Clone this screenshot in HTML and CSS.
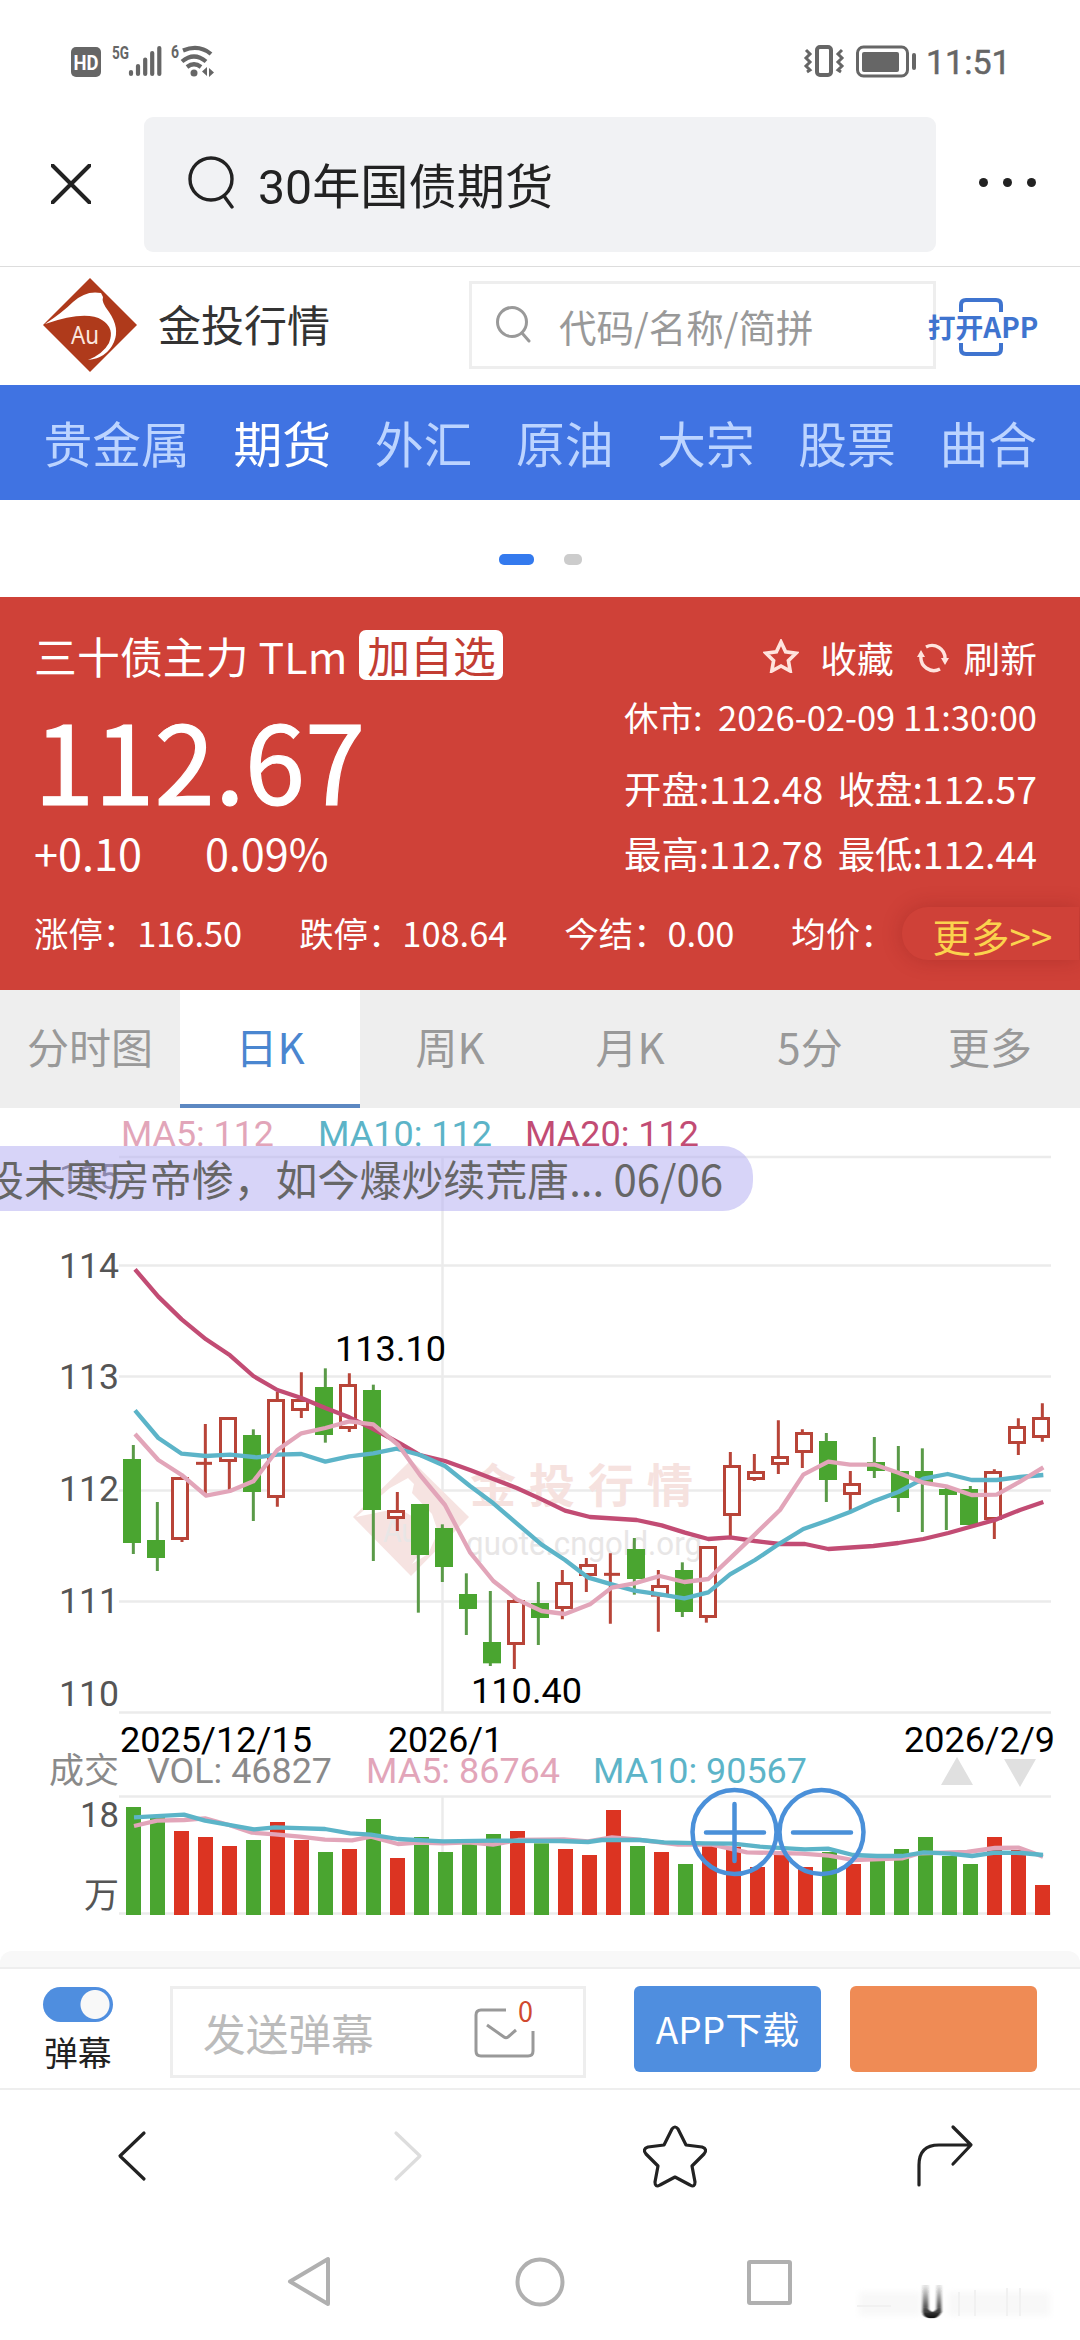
FILE: index.html
```html
<!DOCTYPE html>
<html lang="zh-CN">
<head>
<meta charset="utf-8">
<title>30年国债期货</title>
<link rel="stylesheet" href="styles.css">
</head>
<body>
<header class="status">
  <svg class="status-left" width="170" height="60" viewBox="50 30 170 60">
    <rect x="71" y="47" width="30" height="30" rx="5" fill="#666"/>
    <text x="73.500" y="70" class="st-hd" textLength="25" lengthAdjust="spacingAndGlyphs">HD</text>
    <text x="112" y="59" class="st-5g" textLength="17" lengthAdjust="spacingAndGlyphs">5G</text>
    <g stroke="#666" stroke-width="4.200" stroke-linecap="round">
      <path d="M131 72v2M138 66v8M145.200 59.500v14.500M152.200 53v21M159.300 48v26"/>
    </g>
    <text x="171" y="58" class="st-5g" textLength="8" lengthAdjust="spacingAndGlyphs">6</text>
    <g fill="none" stroke="#666" stroke-width="4.200">
      <path d="M183 50.500Q199 44 211 54M182 61.500Q194 51.500 206 61.500M187 67Q194 61.500 201 67"/>
    </g>
    <circle cx="194" cy="73" r="3.500" fill="#666"/>
    <path d="M207 67v9l-5-4.500zM209 68v9l5-4.500z" fill="#666"/>
  </svg>
  <div class="status-right">
    <svg width="114" height="36" viewBox="802 44 114 36">
      <g fill="none" stroke="#666">
        <rect x="816" y="47" width="14" height="28" rx="3" stroke-width="4"/>
        <path d="M805 50l4 4-4 4 4 4-4 4 4 4-3 2M841 50l-4 4 4 4-4 4 4 4-4 4 3 2" stroke-width="3"/>
        <rect x="856.500" y="47" width="50" height="29" rx="6" stroke-width="3"/>
        <path d="M913 55v13" stroke-width="4" stroke-linecap="round"/>
      </g>
      <rect x="861" y="52" width="37" height="20" rx="2" fill="#666"/>
    </svg>
    <span class="clock">11:51</span>
  </div>
</header>

<div class="browser">
  <svg class="close" width="40" height="40" viewBox="0 0 40 40"><path d="M1.500 1.500l37 37M38.500 1.500l-37 37" stroke="#222" stroke-width="4" stroke-linecap="round"/></svg>
  <div class="query">
    <svg width="46" height="54" viewBox="0 0 46 54" fill="none" stroke="#222" stroke-width="3.400"><circle cx="23" cy="23" r="21"/><path d="M36 40l8 11" stroke-linecap="round"/></svg>
    <span>30年国债期货</span>
  </div>
  <div class="dots"><i></i><i></i><i></i></div>
</div>

<div class="site">
  <svg class="logo" width="94" height="94" viewBox="0 0 94 94">
    <path d="M47 0L94 47 47 94 0 47z" fill="#af3a1b"/>
    <path d="M2 46Q20 34 30 24 43 12 58 15L60 19Q58 24 66 34 77 50 71 64 64 80 45 82 60 76 66 65 72 50 59 42 43 32 2 46z" fill="#fff"/>
    <text x="28" y="66" class="logo-au" textLength="28" lengthAdjust="spacingAndGlyphs">Au</text>
  </svg>
  <h1>金投行情</h1>
  <div class="find">
    <svg width="36" height="38" viewBox="0 0 36 38" fill="none" stroke="#999" stroke-width="3"><circle cx="16" cy="17" r="14.500"/><path d="M26 28l7 8" stroke-linecap="round"/></svg>
    <span>代码/名称/简拼</span>
  </div>
  <div class="open-app">
    <svg width="44" height="58" viewBox="0 0 44 58" fill="none" stroke="#3f74cf" stroke-width="4"><path d="M2 14V7q0-5 5-5h30q5 0 5 5v7M2 45v6q0 5 5 5h30q5 0 5-5v-6"/></svg>
    <b>打开APP</b>
  </div>
</div>

<nav class="cats"><span>贵金属</span><span class="on">期货</span><span>外汇</span><span>原油</span><span>大宗</span><span>股票</span><span>曲合</span></nav>
<div class="pager"><i class="on"></i><i></i></div>

<section class="quote">
  <div class="q-top">
    <div class="name">三十债主力 TLm <span class="add">加自选</span></div>
    <div class="acts">
      <svg width="36" height="34" viewBox="0 0 36 34"><path d="M18 3l4.600 9.800 10.400 1.400-7.600 7.400 1.800 10.400-9.200-5-9.200 5 1.800-10.400L3 14.200l10.400-1.400z" fill="none" stroke="#ffe3dd" stroke-width="3.600"/></svg>
      <span>收藏</span>
      <svg class="reload" width="32" height="32" viewBox="0 0 32 32"><path d="M9 5A13 13 0 0 1 28 17M23 27A13 13 0 0 1 4 14" fill="none" stroke="#ffe3dd" stroke-width="3.400"/><path d="M24 16h8l-4 7zM0 15h8l-4-7z" fill="#ffe3dd"/></svg>
      <span>刷新</span>
    </div>
  </div>
  <div class="q-mid">
    <div class="q-left">
      <div class="price">112.67</div>
      <div class="diff"><span>+0.10</span><span>0.09%</span></div>
    </div>
    <div class="q-right">
      <div class="when"><span>休市:</span><span>2026-02-09 11:30:00</span></div>
      <div class="pair"><span>开盘:112.48</span><span>收盘:112.57</span></div>
      <div class="pair last"><span>最高:112.78</span><span>最低:112.44</span></div>
    </div>
  </div>
  <div class="q-row">
    <span>涨停：116.50</span><span>跌停：108.64</span><span>今结：0.00</span><span>均价：</span>
    <a class="more">更多&gt;&gt;</a>
  </div>
</section>

<div class="tabs"><span>分时图</span><span class="on">日K</span><span>周K</span><span>月K</span><span>5分</span><span>更多</span></div>

<main class="chart">
  <svg id="plot" width="1080" height="843" viewBox="0 1108 1080 843"></svg>
  <div class="danmu">股未寒房帝惨，如今爆炒续荒唐... 06/06</div>
</main>
<div class="strip"></div>

<footer class="bar">
  <div class="switch"><i></i><span>弹幕</span></div>
  <div class="send">
    <span>发送弹幕</span>
    <svg width="62" height="60" viewBox="0 0 62 60"><path d="M32 11H7q-5 0-5 5v36q0 5 5 5h47q5 0 5-5V32" fill="none" stroke="#999" stroke-width="3"/><path d="M13 26l17 12q2 1.500 4 0l8-7" fill="none" stroke="#999" stroke-width="3"/><text x="44" y="23" class="zero" textLength="15" lengthAdjust="spacingAndGlyphs">0</text></svg>
  </div>
  <div class="btn blue">APP下载</div>
  <div class="btn orange"></div>
</footer>

<div class="tools">
  <svg width="1080" height="120" viewBox="0 2091 1080 120" fill="none" stroke="#222" stroke-width="3.200" stroke-linecap="round" stroke-linejoin="round">
    <path d="M144 2133l-24 23 24 23"/>
    <path d="M396 2133l24 23-24 23" stroke="#ddd"/>
    <path d="M672 2129Q675 2125 678 2129L686 2145 702 2147Q708 2149 704 2154L692 2166 695 2182Q695 2188 690 2185L675 2177 660 2185Q655 2188 655 2182L658 2166 646 2154Q642 2149 648 2147L664 2145z"/>
    <path d="M919 2185v-20q0-20 20-20h31M953 2127l18 18-18 19"/>
  </svg>
</div>
<div class="keys">
  <svg width="1080" height="129" viewBox="0 2211 1080 129" fill="none" stroke="#b0b0b0" stroke-width="4" stroke-linejoin="round">
    <defs>
      <linearGradient id="fade" x1="0" y1="0" x2="0" y2="1"><stop offset="0" stop-color="#222" stop-opacity=".1"/><stop offset="1" stop-color="#111"/></linearGradient>
      <filter id="soft" x="-1" y="-.2" width="3" height="1.400"><feGaussianBlur stdDeviation=".8 .3"/></filter>
      <filter id="haze" x="-.1" y="-.3" width="1.200" height="1.600"><feGaussianBlur stdDeviation="3"/></filter>
    </defs>
    <path d="M328 2259v45l-38-22.500z"/>
    <circle cx="540" cy="2282" r="22.500"/>
    <rect x="749" y="2262" width="41" height="41" rx="1"/>
    <g stroke="none" fill="#f8f8f8" filter="url(#haze)"><rect x="859" y="2292" width="62" height="24"/><rect x="948" y="2292" width="102" height="24"/></g>
    <g stroke="#f1f1f1" stroke-width="2"><path d="M857 2306h34M959 2292v24M975 2290v26M1007 2288v28M1020 2288v28"/></g>
    <path d="M922.500 2285h6v24q4 6 8 0v-24h5v27q-4 7-9 6-9 1-10-6z" fill="url(#fade)" stroke="none" filter="url(#soft)"/>
  </svg>
</div>
<script src="chart.js"></script>
</body>
</html>
```
FILE: styles.css
```css
* { box-sizing: border-box; }
body { margin: 0; width: 1080px; height: 2340px; overflow: hidden; background: #fff; display: flex; flex-direction: column; font-family: "Noto Sans CJK SC", sans-serif; }
body > * { flex: none; }
svg { display: block; flex: none; }
span, b, a { white-space: nowrap; }

.status { height: 117px; display: flex; justify-content: space-between; padding: 30px 72px 0 50px; }
.status-right { display: flex; height: 36px; margin-top: 14px; gap: 9px; align-items: center; }
.clock { font: 400 34px/36px Roboto, sans-serif; color: #666; width: 82px; -webkit-text-stroke: .5px #666; }
.st-hd { font: 700 21px Roboto, sans-serif; fill: #fff; }
.st-5g { font: 700 19px Roboto, sans-serif; fill: #666; }

.browser { height: 150px; border-bottom: 1px solid #ddd; display: flex; }
.close { margin: 47px 53px 0 51px; }
.query { width: 792px; height: 135px; border-radius: 9px; background: #f1f2f4; display: flex; padding: 39px 0 0 44px; gap: 24px; font: 400 48.200px/63px Roboto, "Noto Sans CJK SC", sans-serif; color: #222; }
.dots { display: flex; gap: 15px; margin: 61px 0 0 43px; }
.dots i { width: 9px; height: 9px; border-radius: 50%; background: #222; }

.site { height: 118px; display: flex; }
.logo { margin: 11px 0 0 43px; }
.logo-au { font: 400 25px "Noto Sans", sans-serif; fill: #fbe6df; }
.site h1 { margin: 27px 0 0 21px; width: 172px; font-size: 43px; font-weight: 400; line-height: 58px; color: #333; white-space: nowrap; }
.find { width: 467px; height: 88px; margin: 14px 0 0 139px; border: 3px solid #eee; display: flex; padding: 21px 0 0 24px; gap: 27px; color: #999; font-size: 37.500px; line-height: 41px; }
.open-app { width: 116px; margin-left: -11px; display: grid; justify-items: center; }
.open-app svg { grid-area: 1/1; margin: 31px 4px 0 0; }
.open-app b { grid-area: 1/1; font-size: 27.800px; line-height: 34px; margin-top: 42px; color: #3f74cf; font-weight: 700; }

.cats { height: 115px; background: #4073e2; display: flex; gap: 43.600px; padding-left: 43.500px; font-size: 48.800px; line-height: 114px; color: #bcd4ff; }
.cats .on { color: #fff; }
.pager { height: 97px; display: flex; justify-content: center; gap: 30px; padding-top: 54px; }
.pager i { width: 18px; height: 11px; border-radius: 5px; background: #ccc; }
.pager .on { width: 35px; background: #347aee; }

.quote { height: 393px; background: #cf4138; color: #fff; padding: 0 0 0 34px; display: flex; flex-direction: column; }
.q-top { height: 90px; display: flex; justify-content: space-between; padding: 33px 43px 0 0; }
.name { display: flex; font-size: 42.800px; line-height: 50px; white-space: pre; letter-spacing: .15px; }
.add { background: #fff; color: #c23d33; border-radius: 7px; height: 50px; width: 144px; padding-left: 8px; line-height: 48px; margin-left: 2px; }
.acts { display: flex; font-size: 36.700px; line-height: 54px; }
.acts svg { margin: 9px 21px 0 0; }
.acts .reload { margin: 12px 15px 0 23px; }
.q-mid { height: 218px; display: flex; justify-content: space-between; padding-right: 43px; }
.price { font-size: 108.500px; font-weight: 400; line-height: 120px; margin-top: 11px; height: 120px; -webkit-text-stroke: 1.200px #fff; }
.diff { display: flex; font-size: 43.200px; line-height: 50px; margin-top: 9px; }
.diff span + span { margin-left: 63px; }
.q-right { width: 413px; }
.q-right > div { display: flex; justify-content: space-between; }
.when { font-size: 34.500px; line-height: 50px; margin-top: 4px; }
.pair { font-size: 37.400px; line-height: 50px; margin-top: 22px; }
.pair.last { margin-top: 15px; }
.q-row { display: flex; height: 54px; margin-top: 0; gap: 57px; font-size: 34.400px; line-height: 54px; }
.more { width: 177px; margin: 2px 0 0 -50px; height: 53px; border-radius: 26px 0 0 26px; color: #fbd34e; font-size: 38.500px; padding-left: 31px; line-height: 57px; box-shadow: 0 0 20px rgba(120, 20, 20, .28); flex: none; background: #cf4138; }

.tabs { height: 118px; background: #eee; display: grid; grid-template-columns: repeat(6, 180px); text-align: center; color: #999; font-size: 42px; line-height: 112px; }
.tabs .on { background: #fff; color: #4a86d0; border-bottom: 4px solid #5c88c2; }

.chart { height: 843px; position: relative; }
.danmu { position: absolute; left: -62px; top: 38px; width: 815px; height: 65px; border-radius: 30px; background: rgba(184, 179, 243, .56); color: #666; font-size: 41.950px; line-height: 63px; padding-left: 44px; white-space: nowrap; }
.strip { height: 16px; background: #f8f8f8; border-radius: 12px 12px 0 0; }

.bar { height: 123px; border-top: 2px solid #eee; border-bottom: 2px solid #eee; display: flex; padding: 17px 0 0 43px; }
.switch { width: 70px; height: 95px; font-size: 33.800px; line-height: 44px; color: #222; }
.switch i { display: block; width: 70px; height: 35px; border-radius: 18px; background: radial-gradient(circle at 52px 50%, #f8f8f8 14px, #4f8edf 15px); margin: 1px 0 8px; }
.switch span { margin-left: 1px; }
.send { width: 416px; height: 92px; margin-left: 57px; border: 3px solid #eee; color: #bbb; font-size: 42.700px; line-height: 86px; display: flex; padding-left: 30px; }
.send svg { margin: 10px 0 0 100px; }
.zero { font: 400 28px "Noto Sans CJK SC", sans-serif; fill: #d0492f; }
.btn { width: 187px; height: 86px; border-radius: 6px; text-align: center; font-size: 37px; line-height: 85px; color: #fff; }
.btn.blue { background: #4f8edf; margin-left: 48px; }
.btn.orange { background: #ef8b55; margin-left: 29px; }
.tools { height: 120px; margin-top: 1px; }
.keys { height: 129px; }

#plot { font: 400 35px Roboto, "Noto Sans CJK SC", sans-serif; }
#plot .ma5 { stroke: #e2a5b9; } #plot text.ma5 { stroke: none; fill: #e2a5b9; }
#plot .ma10 { stroke: #5cb4c8; } #plot text.ma10 { stroke: none; fill: #5cb4c8; }
#plot .ma20 { stroke: #c24c74; } #plot text.ma20 { stroke: none; fill: #c24c74; }
#plot polyline { fill: none; stroke-width: 4.300; stroke-linejoin: round; }
#plot .grid { stroke: #ebebeb; stroke-width: 2.500; }
#plot .axis { fill: #555; }
#plot .date { fill: #000; }
#plot .gray { fill: #8a8a8a; }
#plot .mark { font-weight: 700; font-size: 46px; fill: #f6e2df; }
#plot .site-url { font-size: 34px; fill: #e8e6e6; }
```
FILE: chart.js
```js
const plot = document.getElementById('plot');
const NS = 'http://www.w3.org/2000/svg';
function el(tag, attrs, text) {
  const n = document.createElementNS(NS, tag);
  for (const k in attrs) n.setAttribute(k, attrs[k]);
  if (text) n.textContent = text;
  plot.appendChild(n);
}
function label(cls, x, y, w, text) {
  el('text', { class: cls, x, y, textLength: w, lengthAdjust: 'spacingAndGlyphs' }, text);
}
function hline(y) { el('path', { class: 'grid', d: `M119 ${y}H1051` }); }

// grid
[1157, 1265.5, 1376.5, 1490.5, 1601.5, 1712.5, 1796.5, 1913.5].forEach(hline);
el('path', { class: 'grid', d: 'M442.500 1157V1712M442.500 1797V1913' });

// watermark
el('path', { d: 'M411 1460L469 1517 411 1576 353 1517z', fill: '#f6e3e1' });
el('path', { d: 'M356 1517L390 1488 408 1478 414 1484 412 1493 432 1514 438 1532 428 1554 412 1564 426 1545 425 1524 405 1512 385 1511z', fill: '#fff' });
label('site-url', 383, 1542, 34, 'Au');
[...'金投行情'].forEach((c, i) => el('text', { class: 'mark', x: 470 + i * 59, y: 1502 }, c));
label('site-url', 466, 1555, 236, 'quote.cngold.org');

// direction, body left, body top, body bottom, wick x, high, low (third-pixels)
const candles = [
  'g 69 657 909 100 615 942', 'g 141 900 954 172 786 993', 'r 213 711 900 246 708 906',
  'd 285 670 670 316 552 765', 'r 357 531 666 388 531 750', 'g 429 585 756 460 568 843',
  'r 501 477 774 532 455 800', 'r 573 477 513 604 397 534', 'g 645 441 585 676 385 608',
  'r 717 432 567 748 400 576', 'g 789 450 810 820 434 963', 'r 861 810 837 892 756 873',
  'g 933 792 945 955 792 1118', 'g 1005 864 981 1027 853 1026', 'g 1077 1062 1107 1099 1000 1185',
  'g 1149 1206 1270 1171 1053 1278', 'r 1221 1080 1215 1243 1075 1287', 'g 1293 1089 1134 1315 1026 1215',
  'r 1365 1026 1107 1387 990 1138', 'r 1437 972 1008 1459 954 1056', 'd 1509 1003 1003 1531 940 1151',
  'g 1581 927 1017 1603 894 1064', 'r 1653 1035 1070 1675 990 1175', 'g 1725 990 1116 1747 967 1131',
  'r 1797 918 1134 1819 918 1148', 'r 1869 675 828 1891 636 888', 'r 1941 693 720 1963 642 723',
  'r 2013 648 675 2035 541 702', 'r 2085 576 639 2107 568 684', 'g 2157 603 720 2179 579 786',
  'r 2229 729 765 2251 693 813', 'g 2301 666 693 2323 591 714', 'g 2373 693 774 2395 618 816',
  'g 2445 693 730 2467 625 876', 'g 2517 747 765 2539 740 870', 'g 2580 747 855 2611 738 855',
  'r 2652 693 840 2683 688 897', 'r 2724 558 612 2755 535 645', 'r 2796 531 594 2827 490 605'
];
const px = v => 100 + v / 3, py = v => 1240 + v / 3;
candles.forEach(row => {
  const [t, ...n] = row.split(' ');
  const [l, top, bot, w, hi, lo] = n.map(Number);
  const X = px(l), T = py(top), B = py(bot), W = px(w);
  if (t === 'g') {
    el('path', { d: `M${W} ${py(hi)}V${py(lo)}`, stroke: '#5a9a48', 'stroke-width': 3 });
    el('rect', { x: X, y: T, width: 18, height: B - T, fill: '#4aa530' });
  } else {
    el('path', { d: `M${W} ${py(hi)}V${T}M${W} ${B}V${py(lo)}`, stroke: '#b84438', 'stroke-width': 3 });
    if (t === 'd') el('path', { d: `M${X + 1} ${T}h16`, stroke: '#b84438', 'stroke-width': 3 });
    else el('rect', { x: X + 1.5, y: T + 1.5, width: 15, height: B - T - 3, fill: '#fff', stroke: '#b84438', 'stroke-width': 3 });
  }
});

function line(cls, pts, fx, fy) {
  const a = pts.split(' ').map(p => p.split(',').map(Number));
  el('polyline', { class: cls, points: a.map(([x, y]) => fx(x) + ',' + fy(y)).join(' ') });
}
line('ma20', '105,88 175,170 245,238 318,298 390,346 460,408 532,450 604,474 676,504 748,532 820,567 900,610 960,645 1035,663 1110,690 1180,717 1250,744 1325,778 1395,812 1470,831 1610,840 1685,856 1755,878 1825,897 1890,892 1965,903 2040,912 2115,912 2185,927 2320,918 2395,909 2470,897 2545,879 2620,858 2690,838 2760,810 2830,786', px, py);
line('ma10', '105,511 175,594 245,641 318,648 390,644 470,652 532,644 604,642 676,665 748,649 820,640 890,626 960,645 1035,678 1110,738 1180,790 1250,850 1325,914 1395,960 1465,1013 1535,1033 1603,1052 1680,1063 1753,1075 1825,1057 1890,1003 1965,960 2040,910 2110,867 2185,841 2250,816 2325,782 2395,756 2470,716 2543,702 2615,720 2690,720 2760,711 2830,705', px, py);
line('ma5', '105,582 175,660 245,705 318,767 390,753 460,724 532,630 604,580 676,564 748,544 820,553 895,615 960,705 1035,795 1110,937 1180,1023 1250,1078 1325,1113 1395,1122 1470,1093 1535,1043 1603,1030 1680,1008 1753,1026 1825,1017 1890,955 1965,883 2040,810 2110,704 2185,665 2250,674 2325,674 2395,698 2470,728 2543,740 2615,765 2690,764 2760,725 2830,682', px, py);

// volume bars: direction and top edge (third-pixels)
const vols = 'g321 g350 r393 r411 r438 g420 r366 r420 g456 r447 g357 r474 g411 g456 g430 g402 r393 g430 r447 r465 r330 g438 r456 g492 r435 r440 r501 r460 r501 g456 r492 g480 g447 g411 g468 g492 r411 r450 r555'.split(' ');
vols.forEach((v, i) => {
  const y = 1700 + v.slice(1) / 3;
  el('rect', { x: 126 + 24 * i - (i > 34 ? 3 : 0), y, width: 15, height: 1915 - y, fill: v[0] === 'g' ? '#4aa530' : '#dc3422' });
});
const vy = v => 1700 + v / 3;
line('ma5', '134,378 157,362 184,360 205,355 229,375 252,398 275,403 300,410 325,419 352,421 371,410 398,432 418,428 443,430 468,427 493,434 518,420 564,418 588,424 612,412 636,418 678,434 712,434 747,457 802,461 829,467 853,480 902,475 919,460 967,456 995,444 1019,443 1036,462 1043,470', v => v, vy);
line('ma10', '134,352 184,344 205,362 254,388 275,382 325,387 350,400 371,404 398,417 443,424 493,422 560,423 588,426 602,420 640,420 664,427 705,430 733,431 760,440 805,448 828,446 853,465 877,468 902,468 924,457 950,461 972,468 995,458 1022,459 1043,465', v => v, vy);

// labels
label('ma5', 121, 1146, 153, 'MA5: 112');
label('ma10', 318, 1146, 174, 'MA10: 112');
label('ma20', 525, 1146, 174, 'MA20: 112');
[[115, 1189], [114, 1278], [113, 1389], [112, 1501], [111, 1613], [110, 1706]].forEach(([t, y]) => label('axis', 59, y, 60, String(t)));
label('date', 335, 1361, 111, '113.10');
label('date', 471, 1703, 111, '110.40');
label('date', 120, 1752, 192, '2025/12/15');
label('date', 388, 1752, 115, '2026/1');
label('date', 904, 1752, 151, '2026/2/9');
label('gray', 49, 1783, 70, '成交');
label('gray', 147, 1783, 185, 'VOL: 46827');
label('ma5', 366, 1783, 194, 'MA5: 86764');
label('ma10', 593, 1783, 214, 'MA10: 90567');
label('axis', 80, 1827, 39, '18');
label('axis', 84, 1908, 35, '万');
el('path', { d: 'M957 1757l16 28h-32zM1020 1787l-16-28h32z', fill: '#e0e0e0' });

// zoom controls
el('path', { d: 'M706 1832.500H764M734.500 1804V1861M793 1832.500H851M776.500 1832a42 42 0 1 1-84 0a42 42 0 1 1 84 0M863.500 1832a42 42 0 1 1-84 0a42 42 0 1 1 84 0', fill: 'none', stroke: '#4a90d9', 'stroke-width': 4.5, 'stroke-linecap': 'round' });
```
